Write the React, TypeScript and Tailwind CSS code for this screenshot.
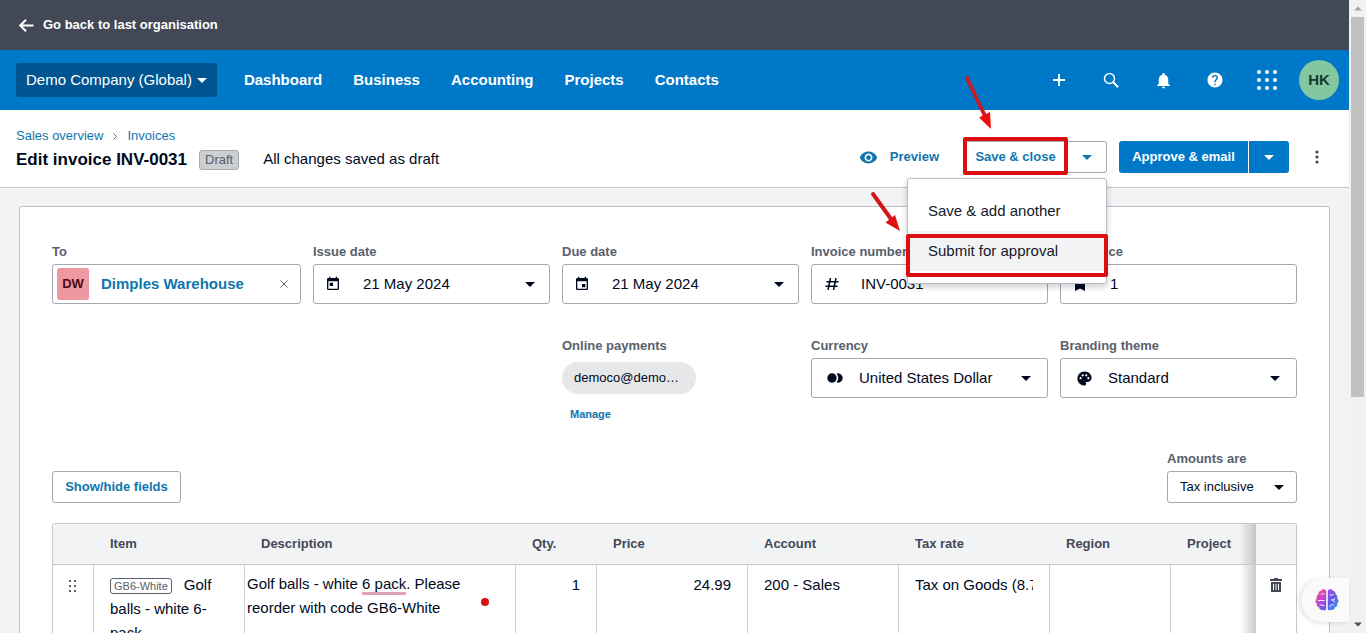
import type { ReactNode } from "react";
import { MdEvent, MdHelp, MdNotifications, MdPalette, MdRemoveRedEye, MdToday } from "react-icons/md";

const navLinks = ["Dashboard", "Business", "Accounting", "Projects", "Contacts"];

const columns = [
  { label: "", width: "w-[41px]" },
  { label: "Item", width: "w-[151px]" },
  { label: "Description", width: "w-[271px]" },
  { label: "Qty.", width: "w-[81px]" },
  { label: "Price", width: "w-[151px]" },
  { label: "Account", width: "w-[151px]" },
  { label: "Tax rate", width: "w-[151px]" },
  { label: "Region", width: "w-[121px]" },
  { label: "Project", width: "w-[85px]" },
  { label: "", width: "w-[40px]" },
];

const fieldBox = "relative flex h-10 items-center rounded-[3px] border border-[#a6a9b0] bg-white";
const cell = "border-r border-[#ccced2] px-4 pt-2 align-top";

function Caret({ className = "w-[10px]" }: { className?: string }) {
  return (
    <svg viewBox="0 0 10 5" className={`h-[5px] shrink-0 ${className}`} fill="currentColor" aria-hidden="true">
      <path d="M0 0h10L5 5z" />
    </svg>
  );
}

function Field({ id, label, children }: { id: string; label: string; children: ReactNode }) {
  return (
    <div className="min-w-0">
      <label htmlFor={id} className="block text-[13px] leading-[25px] font-bold text-[#59606d]">
        {label}
      </label>
      {children}
    </div>
  );
}

function DateField({ id, label, icon }: { id: string; label: string; icon: ReactNode }) {
  return (
    <Field id={id} label={label}>
      <div className={fieldBox}>
        <span className="ml-[11px] flex w-4 justify-center">{icon}</span>
        <input id={id} defaultValue="21 May 2024" className="ml-[22px] min-w-0 flex-1 outline-none" />
        <button aria-label={`Open ${label}`} className="flex h-full w-[38px] items-center justify-center">
          <Caret />
        </button>
      </div>
    </Field>
  );
}

function SelectField({ id, label, value, icon }: { id: string; label: string; value: string; icon: ReactNode }) {
  return (
    <Field id={id} label={label}>
      <div className={fieldBox}>
        <span className="pointer-events-none absolute left-[15px]">{icon}</span>
        <select id={id} className="h-full w-full appearance-none pl-[47px] outline-none">
          <option>{value}</option>
        </select>
        <Caret className="pointer-events-none absolute right-4 w-[10px]" />
      </div>
    </Field>
  );
}

function BrainIcon() {
  return (
    <svg viewBox="0 0 24 24" className="size-6" aria-hidden="true">
      <defs>
        <linearGradient id="brainLeft" x1="0" y1="0" x2="0.6" y2="1">
          <stop offset="0" stopColor="#f7a43c" />
          <stop offset="0.3" stopColor="#e8439e" />
          <stop offset="0.65" stopColor="#b946dc" />
          <stop offset="1" stopColor="#6a5be8" />
        </linearGradient>
        <linearGradient id="brainRight" x1="0" y1="0" x2="0.5" y2="1">
          <stop offset="0" stopColor="#a04be0" />
          <stop offset="0.6" stopColor="#5a5fe6" />
          <stop offset="1" stopColor="#3b8cf0" />
        </linearGradient>
      </defs>
      <path
        fill="url(#brainLeft)"
        d="M11.2 3.2C10.6 1 7.3.6 6.3 2.700 4.300 2.800 3 4.600 3.400 6.500 1.700 7.300 1.200 9 1.800 10.400 0 11.600 0 14.300 1.800 15.300 1.200 17.300 2.300 19 4 19.300 4.300 21.500 6.500 22.700 8.200 21.800 9.500 23.200 11.200 22.300 11.200 20.600z"
      />
      <path
        fill="url(#brainRight)"
        d="M12.800 3.200C13.400 1 16.700.6 17.700 2.700 19.700 2.800 21 4.600 20.600 6.500 22.300 7.300 22.800 9 22.200 10.400 24 11.600 24 14.300 22.200 15.300 22.800 17.300 21.700 19 20 19.300 19.700 21.500 17.500 22.700 15.800 21.800 14.500 23.200 12.800 22.300 12.800 20.600z"
      />
      <path
        fill="none"
        stroke="#fff"
        strokeWidth="1"
        strokeLinecap="round"
        d="M6 6.500Q7 4.500 9 6M3.500 12.500H9M5 17.500Q6 15.500 7.500 17.500H9M14.800 6.500Q16 9 18.500 6.500M16.500 12H18L20 10.500M18 12L19.500 14M15 18.500Q15.500 15.500 18.500 17"
      />
    </svg>
  );
}

function TopBar() {
  return (
    <div className="flex h-[50px] items-center bg-[#434857] px-4">
      <a href="#" className="flex items-center gap-2 text-[13px] font-bold text-white">
        <svg viewBox="0 0 19 14" className="h-[14px] w-[19px]" fill="none" stroke="currentColor" strokeWidth="2">
          <path d="M17.500 7.500H4.500M10 1.700L4.200 7.500L10 13.300" />
        </svg>
        Go back to last organisation
      </a>
    </div>
  );
}

function NavBar() {
  return (
    <header className="flex h-[60px] items-center bg-[#0078c8] pr-[10px] pl-4 text-white">
      <button className="flex h-[34px] items-center gap-[5px] rounded-[3px] bg-[#005590] px-[10px]">
        Demo Company (Global)
        <Caret />
      </button>
      <nav className="ml-3 flex gap-px font-bold">
        {navLinks.map((link) => (
          <a key={link} href="#" className="px-[15px]">
            {link}
          </a>
        ))}
      </nav>
      <div className="ml-auto flex items-center">
        <button aria-label="Create new" className="flex w-[52px] justify-center">
          <svg viewBox="0 0 12 12" className="size-3" stroke="currentColor" strokeWidth="2">
            <path d="M6 0v12M0 6h12" />
          </svg>
        </button>
        <button aria-label="Search" className="flex w-[52px] justify-center">
          <svg viewBox="0 0 16 16" className="size-4" fill="none" stroke="currentColor" strokeWidth="1.500">
            <circle cx="6.500" cy="6.500" r="5" />
            <path d="M10.200 10.200l5 5" strokeWidth="2" />
          </svg>
        </button>
        <button aria-label="Notifications" className="flex w-[52px] justify-center">
          <MdNotifications className="size-[19px]" />
        </button>
        <button aria-label="Help" className="flex w-[52px] justify-center">
          <MdHelp className="size-[18px]" />
        </button>
        <button aria-label="Apps" className="flex w-[52px] justify-center">
          <svg viewBox="0 0 20 20" className="size-5" fill="currentColor">
            {[2, 10, 18].map((y) => [2, 10, 18].map((x) => <circle key={`${x}-${y}`} cx={x} cy={y} r="2" />))}
          </svg>
        </button>
        <button className="ml-[6px] size-10 rounded-full bg-[#83c7a0] font-bold text-[#123b26]">HK</button>
      </div>
    </header>
  );
}

function SaveMenu() {
  return (
    <div className="absolute top-[37px] right-0 z-10 w-[200px] rounded-[3px] border border-[#b9bcc2] bg-white py-3 text-[15px] font-normal text-[#15192b] shadow-[0_3px_6px_rgba(0,10,30,0.2)]">
      <button className="block h-10 w-full px-5 text-left">Save &amp; add another</button>
      <button className="relative block h-10 w-full bg-[#f2f3f4] px-5 text-left">
        Submit for approval
        <span className="absolute top-[3px] -right-[2px] -bottom-[6px] -left-[2px] rounded-[2px] border-4 border-[#d9100f]" />
      </button>
      <svg viewBox="0 0 34 44" className="absolute top-[11px] -left-[39px] h-[44px] w-[34px]" aria-hidden="true">
        <path d="M4 4L22 29" stroke="#d4151b" strokeWidth="4" strokeLinecap="round" />
        <path d="M16.500 32.500L26 25L31 41z" fill="#e01014" />
      </svg>
    </div>
  );
}

function PageHeader() {
  return (
    <div className="flex items-end border-b border-[#c5c7cb] bg-white px-4 pt-4 pb-[14px]">
      <div>
        <nav aria-label="Breadcrumb" className="flex items-center text-[13px] leading-5 text-[#0f75ad]">
          <a href="#">Sales overview</a>
          <svg viewBox="0 0 4 7" className="mx-[10px] h-[7px] w-1" fill="none" stroke="#59606d">
            <path d="M.5.5l3 3-3 3" />
          </svg>
          <a href="#">Invoices</a>
        </nav>
        <div className="flex h-[27px] items-center">
          <h1 className="text-[17px] font-bold">Edit invoice INV-0031</h1>
          <span className="ml-3 rounded-[3px] border border-[#a6a9b0] bg-[#ccced2] px-[5px] text-[13px] leading-[18px] text-[#59606d]">
            Draft
          </span>
          <span className="ml-6">All changes saved as draft</span>
        </div>
      </div>

      <div className="ml-auto flex gap-3 text-[13px] font-bold">
        <button className="flex h-8 items-center gap-3 px-3 text-[#0f75ad]">
          <MdRemoveRedEye className="size-[19px]" />
          Preview
        </button>
        <div className="relative flex h-8 text-[#0f75ad]">
          <button className="relative w-[105px] rounded-l-[3px] border border-[#a6a9b0]">
            Save &amp; close
            <span className="absolute -inset-x-px -top-[5px] -bottom-[3px] rounded-[2px] border-4 border-[#d9100f]" />
          </button>
          <button
            aria-label="More save options"
            aria-expanded="true"
            className="flex w-[39px] items-center justify-center rounded-r-[3px] border border-l-0 border-[#a6a9b0]"
          >
            <Caret />
          </button>
          <svg viewBox="0 0 34 60" className="absolute -top-[69px] -left-[2px] h-[60px] w-[34px]" aria-hidden="true">
            <path d="M6 6L24 44" stroke="#c81b28" strokeWidth="4" strokeLinecap="round" />
            <path d="M18 45.500L29 40L30 57z" fill="#ee0c0c" />
          </svg>
          <SaveMenu />
        </div>
        <div className="flex h-8 gap-px text-white">
          <button className="w-[129px] rounded-l-[3px] bg-[#0078c8]">Approve &amp; email</button>
          <button
            aria-label="More approve options"
            className="flex w-10 items-center justify-center rounded-r-[3px] bg-[#0078c8]"
          >
            <Caret />
          </button>
        </div>
        <button aria-label="More actions" className="flex size-8 items-center justify-center text-[#434857]">
          <svg viewBox="0 0 4 14" className="h-[14px] w-1" fill="currentColor">
            <circle cx="2" cy="2" r="1.600" />
            <circle cx="2" cy="7" r="1.600" />
            <circle cx="2" cy="12" r="1.600" />
          </svg>
        </button>
      </div>
    </div>
  );
}

function InvoiceFields() {
  return (
    <div className="grid grid-cols-[249fr_repeat(4,237fr)] gap-x-3 gap-y-[29px]">
      <Field id="to" label="To">
        <div className={fieldBox}>
          <span className="ml-1 flex size-8 shrink-0 items-center justify-center rounded-[3px] bg-[#ee99a2] text-[13px] font-bold text-[#4c0c18]">
            DW
          </span>
          <input
            id="to"
            defaultValue="Dimples Warehouse"
            className="ml-3 min-w-0 flex-1 font-bold text-[#0f75ad] outline-none"
          />
          <button aria-label="Clear contact" className="flex h-full w-8 items-center justify-center">
            <svg viewBox="0 0 8 8" className="size-2" stroke="#59606d">
              <path d="M.5.5l7 7M7.500.5l-7 7" />
            </svg>
          </button>
        </div>
      </Field>
      <DateField id="issue" label="Issue date" icon={<MdToday className="size-4" />} />
      <DateField id="due" label="Due date" icon={<MdEvent className="size-4" />} />
      <Field id="number" label="Invoice number">
        <div className={fieldBox}>
          <svg viewBox="0 0 14 12" className="ml-[13px] h-3 w-[14px]" fill="none" stroke="currentColor" strokeWidth="1.500">
            <path d="M5.500 0L3 12M11 0L8.500 12M1.500 3.700H13.500M.5 8.300H12.500" />
          </svg>
          <input id="number" defaultValue="INV-0031" className="ml-[22px] min-w-0 flex-1 outline-none" />
        </div>
      </Field>
      <Field id="reference" label="Reference">
        <div className={fieldBox}>
          <svg viewBox="0 0 10 13" className="ml-[14px] h-[13px] w-[10px]" fill="currentColor">
            <path d="M0 1.500Q0 0 1.500 0h7Q10 0 10 1.500V13L5 10.500 0 13z" />
          </svg>
          <input id="reference" defaultValue="1" className="ml-[25px] min-w-0 flex-1 outline-none" />
        </div>
      </Field>

      <div className="col-start-3">
        <p className="text-[13px] leading-[25px] font-bold text-[#59606d]">Online payments</p>
        <button className="mt-1 block h-8 w-[134px] truncate rounded-full bg-[#e6e7e9] px-3 text-left text-[13px]">
          democo@demo…
        </button>
        <button className="mt-3 ml-2 block text-[11px] leading-4 font-bold text-[#0f75ad]">Manage</button>
      </div>
      <SelectField
        id="currency"
        label="Currency"
        value="United States Dollar"
        icon={
          <svg viewBox="0 0 16 10" className="h-[10px] w-4" fill="currentColor">
            <circle cx="5" cy="5" r="4.700" />
            <path d="M9.500.7a4.600 4.600 0 1 1 0 8.600Q13.200 5 9.500.7z" />
          </svg>
        }
      />
      <SelectField id="theme" label="Branding theme" value="Standard" icon={<MdPalette className="size-[17px]" />} />
    </div>
  );
}

function LineItems() {
  return (
    <table className="w-full table-fixed border-separate border-spacing-0 rounded-t-[3px] border border-b-0 border-[#c5c7cb]">
      <thead>
        <tr className="h-[41px] bg-[#f2f3f4] text-left text-[13px] text-[#434857]">
          {columns.map(({ label, width }, i) => (
            <th
              key={i}
              className={`relative border-b border-[#c5c7cb] px-4 ${width} ${
                i === 8
                  ? "after:absolute after:inset-y-0 after:right-0 after:w-4 after:bg-linear-to-r after:from-transparent after:to-[#c3c4c7]"
                  : ""
              }`}
            >
              {label}
            </th>
          ))}
        </tr>
      </thead>
      <tbody>
        <tr className="leading-6">
          <td className="border-r border-[#ccced2] pt-[15px] align-top">
            <svg viewBox="0 0 8 12" className="mx-auto h-3 w-2" fill="#59606d">
              {[0, 5, 10].map((y) => [0, 5].map((x) => <rect key={`${x}-${y}`} x={x} y={y} width="2" height="2" />))}
            </svg>
          </td>
          <td className={cell}>
            <span className="mr-3 rounded-[3px] border border-[#59606d] px-[3px] py-px text-[11px] leading-4 text-[#59606d]">
              GB6-White
            </span>
            Golf balls - white 6-pack
          </td>
          <td className="relative border-r border-[#ccced2] px-[2px] pt-[7px] align-top">
            <div role="textbox" aria-label="Description" className="w-[230px]">
              Golf balls - white <span className="border-b-3 border-[#e0a0b4]">6 pack</span>. Please reorder with code
              GB6-White
            </div>
            <span className="absolute top-[33px] right-[26px] size-2 rounded-full bg-[#d9100f]" />
          </td>
          <td className={`${cell} text-right`}>1</td>
          <td className={`${cell} text-right`}>24.99</td>
          <td className={cell}>200 - Sales</td>
          <td className={cell}>
            <div className="overflow-hidden whitespace-nowrap">Tax on Goods (8.75%)</div>
          </td>
          <td className={cell} />
          <td className="relative after:absolute after:inset-y-0 after:right-0 after:w-4 after:bg-linear-to-r after:from-transparent after:to-[#c9cacc]" />
          <td className="pt-[13px] align-top">
            <button aria-label="Delete line" className="mx-auto block text-[#434857]">
              <svg viewBox="0 0 12 14" className="h-[14px] w-3" fill="currentColor">
                <path d="M4 0h4v1h4v2H0V1h4z" />
                <path fillRule="evenodd" d="M1 4h10v10H1zM3 6v6h1V6zM5.500 6v6h1V6zM8 6v6h1V6z" />
              </svg>
            </button>
          </td>
        </tr>
      </tbody>
    </table>
  );
}

function ScrollTrack() {
  return (
    <div className="flex w-[17px] shrink-0 flex-col items-center bg-[#f1f1f1]" aria-hidden="true">
      <div className="flex h-[17px] items-center text-[#a3a3a3]">
        <Caret className="w-2 rotate-180" />
      </div>
      <div className="h-3/5 w-[13px] bg-[#c1c1c1]" />
      <div className="mt-auto flex h-[17px] items-center text-[#505050]">
        <Caret className="w-2" />
      </div>
    </div>
  );
}

export default function App() {
  return (
    <div className="relative flex h-screen overflow-hidden font-['Liberation_Sans',Arial,sans-serif] text-[15px] text-[#000a1e]">
      <div className="min-w-0 flex-1 overflow-hidden bg-[#f2f3f4]">
        <TopBar />
        <NavBar />
        <PageHeader />
        <main className="mx-[19px] mt-[18px] rounded-[3px] border border-[#bfc1c6] bg-white px-8 pt-8 pb-8">
          <InvoiceFields />
          <div className="mt-6 mb-5 flex items-end justify-between">
            <button className="h-8 w-[129px] rounded-[3px] border border-[#a6a9b0] text-[13px] font-bold text-[#0f75ad]">
              Show/hide fields
            </button>
            <div>
              <label htmlFor="amounts" className="block text-[13px] leading-[25px] font-bold text-[#59606d]">
                Amounts are
              </label>
              <div className="relative flex h-8 w-[130px] items-center rounded-[3px] border border-[#a6a9b0]">
                <select id="amounts" className="h-full w-full appearance-none pl-3 text-[13px] outline-none">
                  <option>Tax inclusive</option>
                </select>
                <Caret className="pointer-events-none absolute right-3 w-[10px]" />
              </div>
            </div>
          </div>
          <LineItems />
        </main>
      </div>
      <ScrollTrack />
      <button
        aria-label="Open assistant"
        className="absolute right-[17px] bottom-[11px] z-20 flex h-[44px] w-12 items-center justify-center rounded-l-full bg-[#fafafa] pl-1 shadow-[-2px_1px_5px_rgba(0,0,0,0.12)]"
      >
        <BrainIcon />
      </button>
    </div>
  );
}
